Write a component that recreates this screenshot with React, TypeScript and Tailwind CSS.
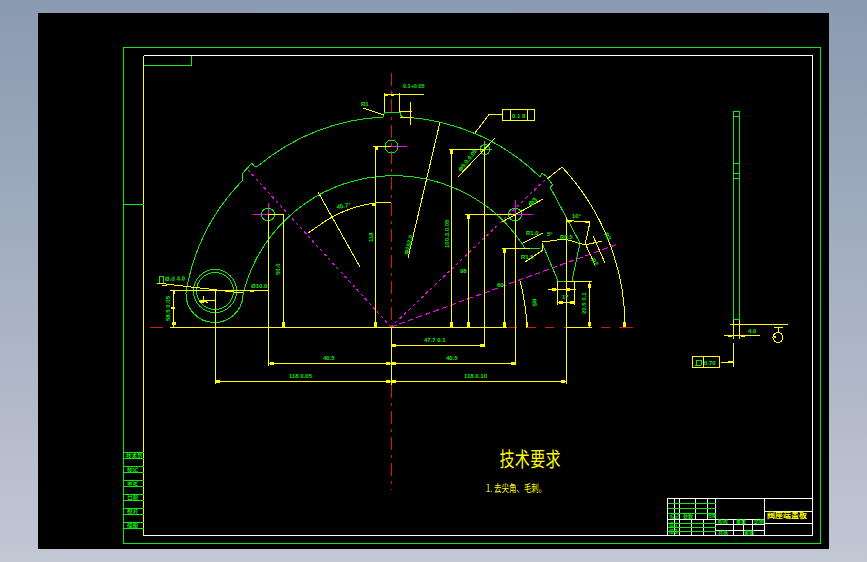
import React from "react";

const G = "#12e812";
const Y = "#ffff00";
const M = "#ff00ff";
const R = "#e01414";
const W = "#ffffff";

type P = [string, string, string?];
// [color, path data, dash]
const paths: P[] = [
  // sheet frames
  [G, "M123.5 47.5H820.5V543.5H123.5Z"],
  [W, "M143.5 55.5H812.5V535.5H143.5"],
  [Y, "M143.5 55.5V535.5"],
  [G, "M143.5 65.5H191.5V55.5"],
  [G, "M123.5 204.5H143.5"],
  [G, "M123.5 452.5H143.5M123.5 458.5H143.5M123.5 466.5H143.5M123.5 472.5H143.5M123.5 480.5H143.5M123.5 486.5H143.5M123.5 494.5H143.5M123.5 500.5H143.5M123.5 508.5H143.5M123.5 514.5H143.5M123.5 522.5H143.5M123.5 528.5H143.5"],
  // title block
  [W, "M667.5 535.5V498.5H812.5M764.5 498.5V535.5M764.5 511.5H812.5M764.5 523.5H812.5M667.5 519.5H764.5"],
  [W, "M674.5 498.5V535.5M679.5 498.5V535.5M695.5 498.5V519.5M707.5 498.5V519.5M715.5 498.5V535.5M691.5 519.5V535.5M703.5 519.5V535.5M733.5 519.5V535.5M743.5 519.5V535.5M752.5 519.5V535.5M715.5 524.5H764.5M715.5 530.5H764.5"],
  [G, "M667.5 503.5H715.5M667.5 508.5H715.5M667.5 513.5H715.5M667.5 523.5H715.5M667.5 527.5H715.5M667.5 531.5H715.5"],
  // centre lines
  [R, "M391.5 73V490", "13 5 3 5"],
  [R, "M150 327.5H163M508 327.5H517M527 327.5H536M545 327.5H554M564 327.5H566M601 327.5H610M619 327.5H633"],
  [Y, "M170 327.5H507M566 327.5H592"],
  // magenta construction lines
  [M, "M391 327L248 170", "3 3"],
  [M, "M391 327L547 178", "3 3"],
  [M, "M391 327L618 244", "6 3"],
  [M, "M253 214.5H268M268 203V222M391 146.5H407M515 214.5H533M515 200V214"],
  // part outline
  [G, "M212 220A210 210 0 0 1 243 180L242 174L252 163L254 166L258 166A210 210 0 0 1 383 117L384.5 112H400V115L403 117A210 210 0 0 1 540 177L542 173L547 177L553 185L550 187L580 243L572 281H558L542 243"],
  [G, "M212 220A210 210 0 0 0 186 293A28.5 28.5 0 0 0 243 295A155 155 0 0 1 523 245L525 248.5H540"],
  // hole circles
  [G, "M193.5 291a21.5 21.5 0 1 0 43 0a21.5 21.5 0 1 0 -43 0M196.5 291a18.5 18.5 0 1 0 37 0a18.5 18.5 0 1 0 -37 0"],
  [G, "M261.5 214.5a6.5 6.5 0 1 0 13 0a6.5 6.5 0 1 0 -13 0"],
  [G, "M385 146.5a6.5 6.5 0 1 0 13 0a6.5 6.5 0 1 0 -13 0"],
  [G, "M508.5 214.5a6.5 6.5 0 1 0 13 0a6.5 6.5 0 1 0 -13 0"],
  [G, "M480 149.5a5 5 0 1 0 10 0a5 5 0 1 0 -10 0M484.5 141V157M477 149.5H492"],
  [G, "M159.5 276.5H163.5V283.5H159.5Z"],
  // dimensions, left
  [Y, "M170 290.5H268.5M173.5 290.5V327.5M215.5 290.5V384M215.5 381.5H391.5M268.5 214.5V366M268.5 363.5H391.5M283.5 214.5V327.5M268 214.5H284M375.5 146.5V327.5M373 146.5H391M391.5 327V385"],
  [Y, "M157 283L243 293M199 301.5H203L209 300.5H215M203 296V300M204 300L208 303"],
  [Y, "M318 192L360 267M308 233L327 220A125 125 0 0 1 391 202"],
  // dimensions, top
  [Y, "M384.5 93V112M399.5 93V112M384 94.5H424M400 111.5H412M400 117H413M410.5 102V125M363 108L384 115"],
  [Y, "M440 122L408 258"],
  [Y, "M449 149.5H485M451.5 149.5V327.5M484.5 149.5V347M391.5 345.5H484.5M458 177L495 138"],
  [Y, "M475 133L489 114.5H502M502.5 109.5H534.5V120.5H502.5ZM510.5 109.5V120.5M527.5 109.5V120.5"],
  // dimensions, right
  [Y, "M465 214.5H515M468.5 214.5V327.5M515.5 214.5V365M391.5 363.5H515.5M566.5 217V384M391.5 381.5H566.5M566 220.5L590 222L585 245"],
  [Y, "M502 248.5H530M504.5 248.5V327.5M523 243L543 233M525 262L543 250M502 222L543 199"],
  [Y, "M542 243L543 250M542 242L565 239L585 245L602 241M593 236L605 263M585 243L595 265"],
  [Y, "M562 167A234 234 0 0 1 625 327.5M562 167L547 179"],
  [Y, "M520 281Q526 303 527 327.5"],
  [Y, "M566 281.5H592M589.5 281.5V327.5M548 289.5H576M557.5 281V305M574.5 281V305M557.5 302.5H574.5"],
  // side view
  [G, "M733.5 111.5H739.5V319.5H733.5ZM733.5 116.5H739.5M733.5 163.5H739.5M733.5 173.5H739.5M733.5 178.5H739.5"],
  [Y, "M733.5 319.5V339M739.5 319.5V339M730 324.5H788M724 335.5H760"],
  [Y, "M773 337.5a5 5 0 1 0 10 0a5 5 0 1 0 -10 0M778.5 327V332M774 327H783"],
  [Y, "M692.5 356.5H719.5V367.5H692.5ZM703.5 356.5V367.5M721 362.5H733M733.5 343V367"],
  [G, "M696 365L697 360H702L701 365Z"],
];

// arrow-like ticks at dimension ends
const ticks: [number, number, number, number][] = [
  [171, 307, 4, 2], [173, 290, 2, 4], [172, 322, 4, 3], [282, 322, 3, 5], [374, 322, 3, 5],
  [216, 380, 4, 3], [270, 362, 4, 3], [386, 362, 4, 3], [386, 380, 4, 3], [392, 344, 4, 3],
  [392, 362, 4, 3], [392, 380, 4, 3], [480, 344, 4, 3], [511, 362, 4, 3], [561, 380, 4, 3],
  [450, 149, 3, 5], [467, 214, 3, 5], [450, 322, 3, 5], [467, 322, 3, 5], [503, 322, 3, 5],
  [503, 248, 3, 5], [588, 284, 3, 4], [588, 322, 3, 4], [526, 322, 2, 5], [623, 322, 3, 5],
  [559, 301, 4, 3], [570, 301, 4, 3], [552, 288, 4, 3], [566, 288, 4, 3], [391, 94, 3, 2],
  [385, 94, 3, 2], [376, 146, 2, 4], [372, 203, 3, 3], [566, 220, 6, 2], [585, 221, 4, 2],
  [225, 290, 7, 2], [250, 290, 4, 2], [162, 285, 5, 1], [200, 300, 4, 3], [728, 361, 5, 2],
  [728, 335, 4, 2], [741, 335, 4, 2], [774, 336, 2, 2],
];

type T = [string, number, number, number?, number?, string?];
// text, x, y, rotate, size, colour
const labels: T[] = [
  ["0.1+0.05", 403, 88, 0, 5.5],
  ["R1", 361, 106, 0, 6],
  ["45.7°", 337, 209, -10, 6],
  ["118", 373, 242, -90, 6],
  ["Φ152.0", 408, 255, -75, 6],
  ["Φ5.0.0.05", 461, 172, -52, 6],
  ["100.3.0.05", 449, 248, -90, 6],
  ["Φ3", 531, 207, -45, 7],
  ["R1.0", 526, 235, 0, 6],
  ["R1.5", 521, 259, 0, 6],
  ["5°", 547, 236, 0, 6],
  ["R0.5", 560, 239, 0, 6],
  ["10°", 572, 218, 0, 6],
  ["R2", 591, 260, 55, 6],
  ["R3", 604, 234, 60, 6],
  ["R5", 532, 299, 85, 6],
  ["98", 460, 273, 0, 6],
  ["60", 497, 287, 0, 6],
  ["17", 562, 299, 0, 6],
  ["20.5 0.1", 586, 314, -90, 6],
  ["50.0", 280, 275, -90, 6],
  ["58.5 0.05", 170, 321, -90, 6],
  ["Ø10.0", 251, 288, 0, 6],
  ["Ø.d 4.0", 165, 281, -2, 6],
  ["40.5", 323, 360, 0, 6],
  ["118 0.05", 289, 378, 0, 6],
  ["47.7 0.1", 424, 342, 0, 6],
  ["40.5", 446, 360, 0, 6],
  ["118 0.10", 464, 378, 0, 6],
  ["0.1 8", 512, 118, 0, 6],
  ["4.0", 748, 333, 0, 6],
  ["0.70", 704, 365, 0, 6],
];

const sideLabels: T[] = [
  ["技术员", 126, 458, 0, 5.5],
  ["标记", 127, 471, 0, 5.5],
  ["审定", 127, 485, 0, 5.5],
  ["日期", 127, 499, 0, 5.5],
  ["校对", 127, 513, 0, 5.5],
  ["描图", 127, 527, 0, 5.5],
  ["标记", 670, 518, 0, 4.5],
  ["处数", 683, 518, 0, 5],
  ["日期", 708, 518, 0, 4],
  ["设计", 669, 526, 0, 4.5],
  ["校核", 669, 533, 0, 4.5],
  ["阶段", 718, 523, 0, 5],
  ["重量", 736, 523, 0, 5],
  ["比例", 754, 523, 0, 5],
  ["共张", 718, 534, 0, 5],
  ["第张", 744, 534, 0, 5],
];

const cjk = '"Noto Sans CJK SC","Liberation Sans",sans-serif';

export default function App() {
  return (
    <div className="w-[867px] h-[562px] overflow-hidden bg-linear-to-b from-[#8a9ab0] to-[#c2c7d4] pt-[13px] pl-[38px]">
      <div className="w-[791px] h-[536px] bg-black">
        <svg
          className="block"
          width={791}
          height={536}
          viewBox="38 13 791 536"
          fill="none"
          shapeRendering="crispEdges"
        >
          {paths.map(([c, d, dash], i) => (
            <path key={i} d={d} stroke={c} strokeWidth={1} strokeDasharray={dash} />
          ))}
          {ticks.map(([x, y, w, h], i) => (
            <rect key={i} x={x} y={y} width={w} height={h} fill={Y} />
          ))}
          {labels.map(([t, x, y, r, s, c], i) => (
            <text
              key={i}
              x={x}
              y={y}
              fill={c ?? G}
              fontSize={s}
              fontWeight={700}
              fontFamily='"Liberation Sans",sans-serif'
              transform={r ? `rotate(${r} ${x} ${y})` : undefined}
            >
              {t}
            </text>
          ))}
          {sideLabels.map(([t, x, y, , s], i) => (
            <text key={i} x={x} y={y} fill={G} fontSize={s} fontWeight={700} fontFamily={cjk}>
              {t}
            </text>
          ))}
          <text x={767} y={518} fill={Y} fontSize={8} fontWeight={700} fontFamily={cjk}>
            阀座端盖板
          </text>
          <text
            transform="translate(499.5 467) scale(0.75 1)"
            fill={Y}
            fontSize={20}
            fontFamily={cjk}
            letterSpacing={0.5}
          >
            技术要求
          </text>
          <text
            transform="translate(486 492) scale(0.75 1)"
            fill={Y}
            fontSize={10}
            fontFamily={cjk}
          >
            1. 去尖角、毛刺。
          </text>
        </svg>
      </div>
    </div>
  );
}
